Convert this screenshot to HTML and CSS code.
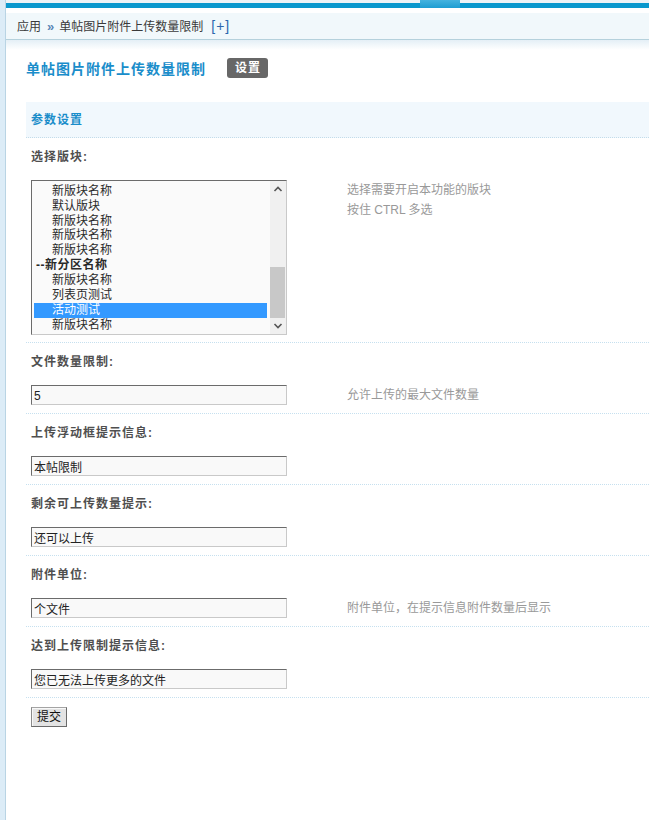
FILE: index.html
```html
<!DOCTYPE html>
<html lang="zh-CN">
<head>
<meta charset="utf-8">
<title>单帖图片附件上传数量限制</title>
<link rel="stylesheet" href="styles.css">
</head>
<body>
<div class="page">
  <div class="leftbar"></div>
  <div class="main">
    <div class="topbar"><span class="toptab"></span></div>
    <div class="crumbs">应用<span class="sep">»</span>单帖图片附件上传数量限制<a class="plus">[+]</a></div>
    <div class="content">
      <div class="itemtitle"><h3>单帖图片附件上传数量限制</h3><span class="badge">设置</span></div>
      <form class="form">
        <div class="secthead">参数设置</div>

        <div class="label">选择版块:</div>
        <div class="field selrow">
          <div class="cell">
            <div class="listbox">
              <ul class="options">
                <li>新版块名称</li>
                <li>默认版块</li>
                <li>新版块名称</li>
                <li>新版块名称</li>
                <li>新版块名称</li>
                <li class="group">--新分区名称</li>
                <li>新版块名称</li>
                <li>列表页测试</li>
                <li class="selected">活动测试</li>
                <li>新版块名称</li>
              </ul>
              <div class="scrollbar">
                <div class="sbtn"><svg width="16" height="16" viewBox="0 0 16 16"><path d="M4.5 10 L8 6.5 L11.5 10" fill="none" stroke="#555" stroke-width="1.6"/></svg></div>
                <div class="track"><div class="thumb"></div></div>
                <div class="sbtn"><svg width="16" height="16" viewBox="0 0 16 16"><path d="M4.5 6 L8 9.5 L11.5 6" fill="none" stroke="#555" stroke-width="1.6"/></svg></div>
              </div>
            </div>
          </div>
          <div class="tips">选择需要开启本功能的版块<br>按住 CTRL 多选</div>
        </div>

        <div class="label">文件数量限制:</div>
        <div class="field">
          <div class="cell"><input class="txt" type="text" value="5"></div>
          <div class="tips">允许上传的最大文件数量</div>
        </div>

        <div class="label">上传浮动框提示信息:</div>
        <div class="field">
          <div class="cell"><input class="txt" type="text" value="本帖限制"></div>
          <div class="tips"></div>
        </div>

        <div class="label">剩余可上传数量提示:</div>
        <div class="field">
          <div class="cell"><input class="txt" type="text" value="还可以上传"></div>
          <div class="tips"></div>
        </div>

        <div class="label">附件单位:</div>
        <div class="field">
          <div class="cell"><input class="txt" type="text" value="个文件"></div>
          <div class="tips">附件单位，在提示信息附件数量后显示</div>
        </div>

        <div class="label">达到上传限制提示信息:</div>
        <div class="field">
          <div class="cell"><input class="txt" type="text" value="您已无法上传更多的文件"></div>
          <div class="tips"></div>
        </div>

        <div class="submitrow"><button class="btn" type="button">提交</button></div>
      </form>
    </div>
  </div>
</div>
</body>
</html>
```

FILE: styles.css
```css
* { box-sizing: border-box; }
html, body { margin: 0; padding: 0; background: #fff; }
body {
  font-family: "Liberation Sans", "Noto Sans CJK SC", sans-serif;
  font-size: 12px;
  color: #333;
}
.page {
  display: flex;
  min-height: 100vh;
}
.leftbar {
  width: 6px;
  flex: none;
  background: #dcecf7;
  border-right: 1px solid #b9d4e4;
}
.main {
  flex: 1;
  min-width: 0;
}
.topbar {
  height: 8px;
  display: flex;
  background: linear-gradient(to bottom, #eef3f6 0, #eef3f6 3px, #0a98cd 3px, #0a98cd 8px);
}
.toptab {
  display: block;
  width: 40px;
  height: 8px;
  margin-left: 414px;
  background: linear-gradient(to bottom, #45b3df, #1d9dd2);
}
.crumbs {
  margin-top: 5px;
  height: 27px;
  line-height: 26px;
  padding-left: 11px;
  background: #f1f8fb;
  border-bottom: 1px solid #b5d1dc;
  color: #3a3a3a;
  font-size: 12px;
}
.crumbs .sep {
  color: #5a86b5;
  margin: 0 5px 0 6px;
  font-size: 13px;
  font-weight: bold;
}
.crumbs .plus {
  color: #2a66ad;
  font-size: 14px;
  margin-left: 8px;
  letter-spacing: 1px;
}
.content {
  padding: 18px 0 0 20px;
  background: linear-gradient(to bottom, #e4eff6 0, #ffffff 10px) no-repeat;
}
.itemtitle {
  display: flex;
  align-items: center;
  height: 20px;
}
.itemtitle h3 {
  margin: 0 21px 0 0;
  font-size: 14px;
  font-weight: bold;
  letter-spacing: 1px;
  color: #1a8dca;
  line-height: 20px;
  padding-top: 1px;
}
.badge {
  display: inline-block;
  height: 20px;
  line-height: 20px;
  padding: 0 7px 0 8px;
  background: #676767;
  color: #fff;
  font-weight: bold;
  font-size: 12px;
  letter-spacing: 1px;
  border-radius: 3px;
}
.form {
  margin: 24px 0 0 0;
}
.secthead {
  height: 36px;
  line-height: 33px;
  padding: 2px 0 0 5px;
  background: #f1f8fd;
  border-bottom: 1px dotted #c3dcea;
  color: #1a8dca;
  font-weight: bold;
  letter-spacing: 1px;
}
.label {
  height: 36px;
  line-height: 34px;
  padding: 2px 0 0 5px;
  color: #4f4f4f;
  font-weight: bold;
  letter-spacing: 1px;
}
.field {
  display: grid;
  grid-template-columns: 316px 1fr;
  padding: 6px 0 8px 0;
  border-bottom: 1px dotted #c6e0ef;
}
.field.selrow {
  padding-bottom: 7px;
}
.cell {
  padding-left: 5px;
}
.tips {
  padding-left: 5px;
  line-height: 20px;
  color: #999;
}
.listbox {
  display: flex;
  width: 256px;
  height: 155px;
  border: 1px solid;
  border-color: #6b6b6b #c9c9c9 #c9c9c9 #6b6b6b;
  background: #fafafa;
  overflow: hidden;
}
.options {
  flex: 1;
  list-style: none;
  margin: 0;
  padding: 2.8px 3px 0 2px;
  overflow: hidden;
}
.options li {
  height: 14.9px;
  line-height: 14.9px;
  padding-left: 18px;
  color: #2a2a2a;
  white-space: nowrap;
}
.options li.group {
  padding-left: 2px;
  font-weight: bold;
  letter-spacing: 0.5px;
}
.options li.selected {
  background: #3399ff;
  color: #fff;
}
.scrollbar {
  width: 16px;
  flex: none;
  display: flex;
  flex-direction: column;
  background: #f0f0f0;
}
.sbtn {
  height: 16px;
  flex: none;
}
.sbtn svg { display: block; }
.track {
  flex: 1;
  display: flex;
  flex-direction: column;
  justify-content: flex-end;
}
.thumb {
  height: 51px;
  width: 15px;
  background: #c8c8c8;
}
.txt {
  display: block;
  width: 256px;
  height: 20px;
  margin: 0;
  padding: 1px 2px 0;
  border: 1px solid;
  border-color: #6b6b6b #c9c9c9 #c9c9c9 #6b6b6b;
  background: #f9f9f9;
  font-family: "Liberation Sans", "Noto Sans CJK SC", sans-serif;
  font-size: 12px;
  color: #222;
  line-height: 17px;
  outline: none;
}
.submitrow {
  padding: 9px 0 0 5px;
}
.btn {
  display: block;
  width: 36px;
  height: 20px;
  margin: 0;
  padding: 0;
  border: 1px solid;
  border-color: #a4a4a4 #6a6a6a #6a6a6a #8a8a8a;
  background: #e3e3e3;
  box-shadow: inset 1px 1px 0 #f8f8f8;
  font-family: "Liberation Sans", "Noto Sans CJK SC", sans-serif;
  font-size: 12px;
  color: #111;
  line-height: 18px;
}
```
